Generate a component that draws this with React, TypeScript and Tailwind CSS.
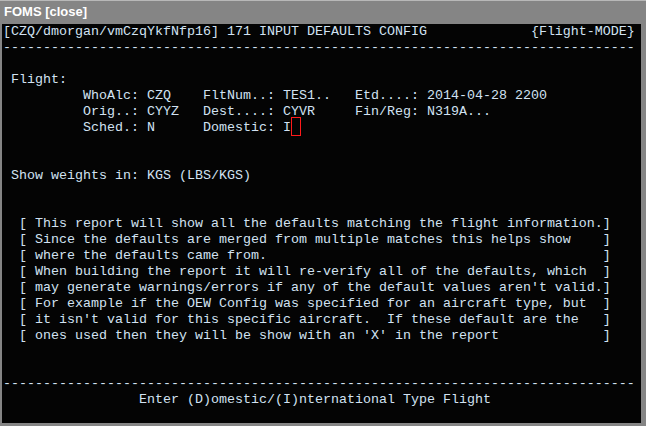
const note = [
  "This report will show all the defaults matching the flight information.",
  "Since the defaults are merged from multiple matches this helps show",
  "where the defaults came from.",
  "When building the report it will re-verify all of the defaults, which",
  "may generate warnings/errors if any of the default values aren't valid.",
  "For example if the OEW Config was specified for an aircraft type, but",
  "it isn't valid for this specific aircraft.  If these default are the",
  "ones used then they will be show with an 'X' in the report",
]

const dashes = "-".repeat(79)

function Line({ text }: { text: string }) {
  return <div className="h-4 whitespace-pre">{text}</div>
}

export default function App() {
  return (
    <div className="w-[646px] h-[426px] bg-[#858585] border-t border-[#b8b8b8] flex flex-col overflow-hidden">
      {/* Title bar */}
      <div className="h-[23px] pl-[4px] pt-[3px] text-white font-bold text-[13px] leading-4 font-['Liberation_Sans',Arial,sans-serif]">
        FOMS [close]
      </div>

      {/* Terminal */}
      <div className="ml-[2px] w-[639px] h-[399px] bg-[#040404] pl-px text-[#d2e2f2] text-[13.333px] leading-4 font-['Liberation_Mono','Courier_New',monospace]">
        <Line text={"[CZQ/dmorgan/vmCzqYkfNfp16] 171 INPUT DEFAULTS CONFIG             {Flight-MODE}"} />
        <Line text={dashes} />
        <Line text="" />
        <Line text=" Flight:" />
        <Line text={"          WhoAlc: CZQ    FltNum..: TES1..   Etd....: 2014-04-28 2200"} />
        <Line text={"          Orig..: CYYZ   Dest....: CYVR     Fin/Reg: N319A..."} />
        <div className="h-4 whitespace-pre flex">
          <span>{"          Sched.: N      Domestic: I"}</span>
          <span className="relative w-2">
            <span className="absolute left-0 -top-[3px] w-[10px] h-[19px] border border-[#ff1a1a]" />
          </span>
        </div>
        <Line text="" />
        <Line text="" />
        <Line text=" Show weights in: KGS (LBS/KGS)" />
        <Line text="" />
        <Line text="" />
        {note.map((t) => (
          <Line key={t} text={"  [ " + t.padEnd(71, " ") + "]"} />
        ))}
        <Line text="" />
        <Line text="" />
        <Line text={dashes} />
        <Line text={"                 Enter (D)omestic/(I)nternational Type Flight"} />
      </div>
    </div>
  )
}
